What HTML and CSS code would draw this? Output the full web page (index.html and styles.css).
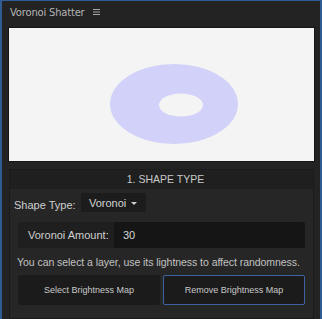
FILE: index.html
```html
<!DOCTYPE html>
<html>
<head>
<meta charset="utf-8">
<link rel="stylesheet" href="styles.css">
</head>
<body>
<div class="frame">
  <div class="tab">
    <span class="tab-title">Voronoi Shatter</span>
    <svg class="menu" width="7" height="6" viewBox="0 0 7 6"><rect x="0" y="0" width="7" height="1" fill="#a8a8a8"/><rect x="0" y="2.5" width="7" height="1" fill="#a8a8a8"/><rect x="0" y="5" width="7" height="1" fill="#a8a8a8"/></svg>
  </div>
  <div class="preview">
    <svg width="304" height="133" viewBox="0 0 304 133">
      <path fill="#d1d1f9" fill-rule="evenodd" d="M100 37 a64 40 0 1 0 128 0 a64 40 0 1 0 -128 0 Z M149 38 a22 11.5 0 1 0 44 0 a22 11.5 0 1 0 -44 0 Z" transform="translate(0,38)"/>
    </svg>
  </div>
  <div class="section">
    <div class="section-head">1. SHAPE TYPE</div>
    <div class="section-body">
      <div class="row-type">
        <span class="label">Shape Type:</span>
        <span class="select">Voronoi <span class="caret"></span></span>
      </div>
      <div class="amount">
        <span class="amount-label">Voronoi Amount:</span>
        <span class="amount-input">30</span>
      </div>
      <p class="desc">You can select a layer, use its lightness to affect randomness.</p>
      <div class="buttons">
        <div class="btn">Select Brightness Map</div>
        <div class="btn btn-active">Remove Brightness Map</div>
      </div>
    </div>
  </div>
</div>
</body>
</html>
```
FILE: styles.css
```css
html, body {
  margin: 0;
  padding: 0;
  background: #232323;
}
.frame {
  box-sizing: border-box;
  width: 322px;
  height: 319px;
  border-top: 1px solid #2f5d93;
  border-left: 2px solid #2f5d93;
  border-right: 2px solid #2f5d93;
  background: #232323;
  font-family: "Liberation Sans", Arial, sans-serif;
  overflow: hidden;
}
.tab {
  height: 26px;
  display: flex;
  align-items: center;
  padding-left: 8px;
  gap: 8px;
}
.tab-title {
  font-family: "DejaVu Sans", sans-serif;
  font-size: 10px;
  color: #b4b4b4;
  letter-spacing: -0.2px;
  margin-top: -4px;
}
.menu {
  margin-top: -4px;
}
.preview {
  margin: 0 5px 0 6px;
  height: 135px;
  background: #f4f4f4;
  border: 1px solid #151515;
  box-sizing: border-box;
  padding: 1px 0 0 1px;
}
.preview svg {
  display: block;
}
.section {
  margin: 7px 6px 0 7px;
  border: 1px solid #1b1b1b;
  background: #262626;
  height: 150px;
  box-sizing: border-box;
}
.section-head {
  height: 19px;
  background: #1f1f1f;
  color: #c9c9c9;
  font-size: 10.5px;
  text-align: center;
  line-height: 19px;
  padding-left: 8px;
}
.section-body {
  padding: 3px 8px 0 4px;
}
.row-type {
  display: flex;
  align-items: center;
  height: 21px;
}
.label {
  color: #cfcfcf;
  font-size: 11px;
  margin-top: 5px;
}
.select {
  margin-left: 5px;
  background: #1c1c1c;
  border-radius: 2px;
  height: 19px;
  width: 65px;
  box-sizing: border-box;
  display: flex;
  align-items: center;
  justify-content: center;
  gap: 5px;
  color: #d4d4d4;
  font-size: 11px;
}
.caret {
  width: 0;
  height: 0;
  border-left: 3.5px solid transparent;
  border-right: 3.5px solid transparent;
  border-top: 3.5px solid #cfcfcf;
  margin-top: 1px;
}
.amount {
  display: flex;
  margin: 9px 0 0 4px;
  height: 26px;
  border-radius: 2px;
  overflow: hidden;
}
.amount-label {
  width: 96px;
  background: #1f1f1f;
  color: #cfcfcf;
  font-size: 11px;
  line-height: 26px;
  padding-left: 10px;
  box-sizing: border-box;
}
.amount-input {
  flex: 1;
  background: #151515;
  color: #d6d6d6;
  font-size: 11px;
  line-height: 26px;
  padding-left: 9px;
}
.desc {
  margin: 8px 0 0 3px;
  color: #c2c2c2;
  font-size: 10.5px;
  white-space: nowrap;
  letter-spacing: -0.05px;
}
.buttons {
  display: flex;
  gap: 3px;
  margin: 7px 0 0 4px;
}
.btn {
  flex: 1;
  height: 30px;
  background: #1b1b1b;
  border: 1px solid #1b1b1b;
  border-radius: 2px;
  box-sizing: border-box;
  color: #c8c8c8;
  font-size: 9px;
  display: flex;
  align-items: center;
  justify-content: center;
}
.btn-active {
  border-color: #3f63a0;
}
```
